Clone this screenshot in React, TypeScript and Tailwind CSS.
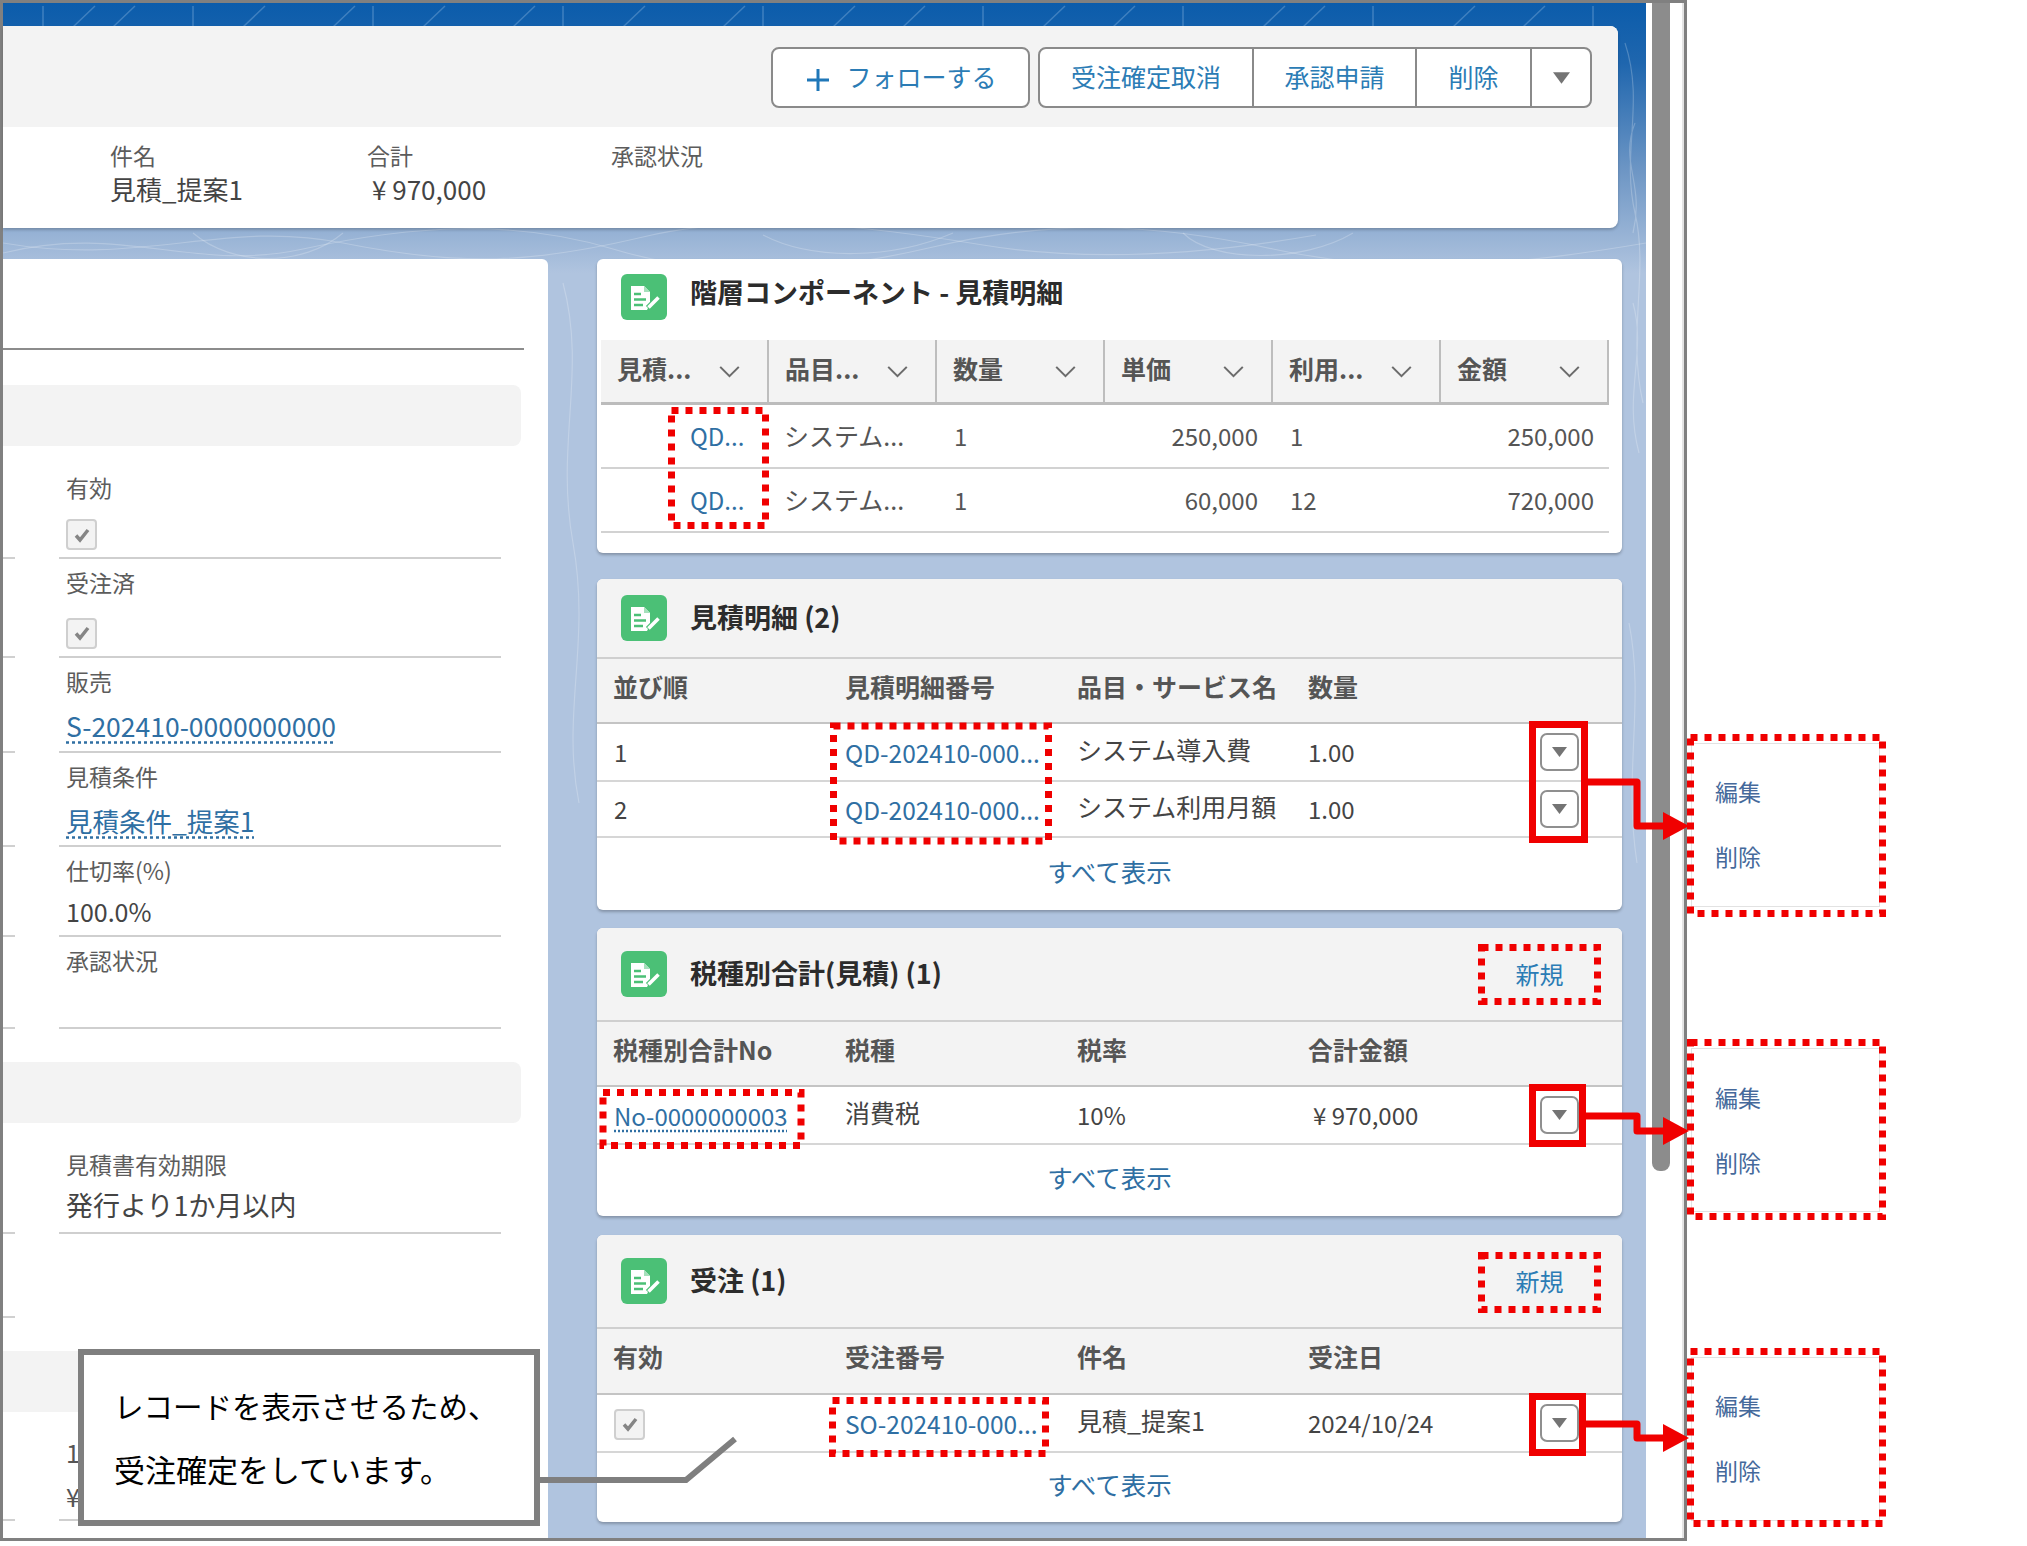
import type { ReactNode } from "react";

const linkClass = "text-[#2f6fa3]";

function RecordIcon() {
  return (
    <svg viewBox="0 0 46 46" className="w-[46px] h-[46px] shrink-0">
      <rect width="46" height="46" rx="6" fill="#4bc076" />
      <path d="M10 12h13l6 6v12l-3 6H10z" fill="#fff" />
      <path d="M23 12l6 6h-6z" fill="#a5e0bb" />
      <path d="M13 20h7M13 25.500h12M13 31h9" stroke="#4bc076" strokeWidth="2.500" />
      <path d="M27 34l11-11" stroke="#4bc076" strokeWidth="6" />
      <path d="M27.500 33.500l10-10" stroke="#fff" strokeWidth="3.500" />
    </svg>
  );
}

function Caret({ className }: { className: string }) {
  return (
    <svg viewBox="0 0 18 12" className={className}>
      <path d="M0 0h18L9 12z" fill="#747474" />
    </svg>
  );
}

function Checkbox() {
  return (
    <span className="flex items-center justify-center w-[31px] h-[31px] bg-[#f3f3f3] border-2 border-[#cfcfcf] rounded-[4px]">
      <svg viewBox="0 0 20 20" className="w-[20px] h-[20px]">
        <path d="M4 10.500l4 4.500 8-10" fill="none" stroke="#858585" strokeWidth="3.500" />
      </svg>
    </span>
  );
}

function RowMenu() {
  return (
    <span className="flex items-center justify-center w-[39px] h-[38px] bg-white border-2 border-[#8f8f8f] rounded-[7px]">
      <Caret className="w-[15px] h-[10px]" />
    </span>
  );
}

// cells sit slightly off the row centre in the source, kanji above and links below
function Jp({ children }: { children: ReactNode }) {
  return <div className="pb-[5px]">{children}</div>;
}

function Num({ children }: { children: ReactNode }) {
  return <div className="text-[24px]">{children}</div>;
}

function RowLink({ children, dotted }: { children: ReactNode; dotted?: boolean }) {
  return (
    <div className={`pt-[3px] text-[24.500px] ${linkClass}`}>
      <span className={dotted ? "text-[24px] underline decoration-dotted underline-offset-4" : ""}>{children}</span>
    </div>
  );
}

function Field({ label, height, valueClass = "", children }: { label: string; height: string; valueClass?: string; children?: ReactNode }) {
  return (
    <div className="flex items-end">
      <div className="w-[12px] border-b-2 border-[#d0d0d0]" />
      <div className={`ml-[44px] w-[442px] border-b-2 border-[#cfcfcf] pl-[7px] ${height}`}>
        <div className="mt-[4px] h-[38px] leading-[38px] text-[23px] text-[#5c5c5c]">{label}</div>
        <div className={`h-[52px] flex items-center text-[#444] ${valueClass}`}>{children}</div>
      </div>
    </div>
  );
}

function LeftPanel() {
  return (
    <div className="w-[545px] bg-white rounded-tr-md overflow-hidden">
      <div className="h-[91px] w-[521px] border-b-2 border-[#8c8c8c]" />
      <div className="mt-[35px] h-[61px] w-[518px] bg-[#f3f3f3] rounded-r-lg" />
      <div className="flex items-end">
        <div className="w-[12px] border-b-2 border-[#d0d0d0]" />
        <div className="ml-[44px] w-[442px] h-[113px] border-b-2 border-[#cfcfcf] pl-[7px] pt-[22px]">
          <div className="h-[38px] leading-[38px] text-[23px] text-[#5c5c5c]">有効</div>
          <div className="mt-[13px]"><Checkbox /></div>
        </div>
      </div>
      <Field label="受注済" height="h-[99px]"><div className="mt-[12px]"><Checkbox /></div></Field>
      <Field label="販売" height="h-[95px]" valueClass="text-[26.500px]">
        <span className={`${linkClass} underline decoration-dotted underline-offset-4`}>S-202410-0000000000</span>
      </Field>
      <Field label="見積条件" height="h-[94px]" valueClass="text-[26.500px]">
        <span className={`${linkClass} underline decoration-dotted underline-offset-4`}>見積条件_提案1</span>
      </Field>
      <Field label="仕切率(%)" height="h-[90px]" valueClass="text-[25px] pb-[6px]">100.0%</Field>
      <Field label="承認状況" height="h-[92px]" />
      <div className="mt-[33px] h-[61px] w-[518px] bg-[#f3f3f3] rounded-r-lg" />
      <div className="mt-[18px]">
        <Field label="見積書有効期限" height="h-[93px]" valueClass="text-[27px] pb-[7px]">発行より1か月以内</Field>
      </div>
      <div className="w-[12px] h-[84px] border-b-2 border-[#d0d0d0]" />
      <div className="mt-[33px] h-[61px] w-[518px] bg-[#f3f3f3] rounded-r-lg" />
      <div className="flex items-end mt-[18px]">
        <div className="w-[12px] border-b-2 border-[#d0d0d0]" />
        <div className="ml-[44px] w-[442px] h-[91px] border-b-2 border-[#cfcfcf] pl-[7px] text-[25px] leading-[44px] text-[#555]">
          <div>1</div>
          <div>¥</div>
        </div>
      </div>
    </div>
  );
}

function Panel({ title, top, className, action, children }: { title: string; top: string; className: string; action?: boolean; children: ReactNode }) {
  return (
    <div className={`bg-white rounded-md shadow-[0_2px_3px_rgba(0,0,0,0.25)] overflow-hidden ${className}`}>
      <div className={`flex items-center bg-[#f3f3f3] pl-[24px] pr-[21px] border-b-2 border-[#cfcfcf] ${top}`}>
        <RecordIcon />
        <div className="ml-[23px] pb-[2px] text-[27px] font-bold text-[#2c2c2c] flex-1">{title}</div>
        {action && <div className="w-[123px] text-center text-[24px] text-[#2b7cb5]">新規</div>}
      </div>
      {children}
    </div>
  );
}

function DataTable({ headers, rows, headHeight, rowHeights, footHeight }: { headers: string[]; rows: ReactNode[][]; headHeight: string; rowHeights: string[]; footHeight: string }) {
  return (
    <div>
      <div className={`grid grid-cols-[248px_232px_231px_232px_82px] items-center pb-[8px] bg-[#f3f3f3] border-b-2 border-[#c4c4c4] text-[25px] font-bold text-[#555] ${headHeight}`}>
        {headers.map((h, i) => (
          <div key={h} className={i === 0 ? "pl-[16px]" : ""}>{h}</div>
        ))}
      </div>
      {rows.map((row, r) => (
        <div key={r} className={`grid grid-cols-[248px_232px_231px_232px_82px] items-center border-b-2 border-[#d6d6d6] text-[25px] text-[#444] ${rowHeights[r]}`}>
          {row.map((cell, i) => (
            <div key={i} className={i === 0 ? "pl-[17px]" : ""}>{cell}</div>
          ))}
          <RowMenu />
        </div>
      ))}
      <div className={`flex items-center justify-center pb-[6px] text-[25.500px] ${linkClass} ${footHeight}`}>すべて表示</div>
    </div>
  );
}

const hierarchyHeads = ["見積...", "品目...", "数量", "単価", "利用...", "金額"];
const hierarchyRows = [
  ["QD...", "システム...", "1", "250,000", "1", "250,000"],
  ["QD...", "システム...", "1", "60,000", "12", "720,000"],
];
const hierarchyCols = [
  `pl-[89px] ${linkClass}`,
  "pl-[15px] text-[25px]",
  "pl-[17px]",
  "pr-[15px] text-right",
  "pl-[17px]",
  "pr-[15px] text-right",
];

function HierarchyPanel() {
  return (
    <div className="h-[294px] bg-white rounded-md shadow-[0_2px_3px_rgba(0,0,0,0.25)]">
      <div className="h-[81px] flex items-center pl-[24px] pb-[5px]">
        <RecordIcon />
        <div className="ml-[23px] pb-[9px] text-[27px] font-bold text-[#2c2c2c]">階層コンポーネント - 見積明細</div>
      </div>
      <div className="ml-[4px] w-[1008px]">
        <div className="grid grid-cols-6 h-[65px] bg-[#f3f3f3] border-b-[3px] border-[#bcbcbc]">
          {hierarchyHeads.map((h) => (
            <div key={h} className="flex items-center justify-between pl-[16px] pr-[26px] border-r-2 border-[#bdbdbd] text-[25px] font-bold text-[#555]">
              <span className="pb-[5px]">{h}</span>
              <svg viewBox="0 0 24 14" className="w-[23px] h-[13px]">
                <path d="M2 2l10 10L22 2" fill="none" stroke="#6b6b6b" strokeWidth="2.200" />
              </svg>
            </div>
          ))}
        </div>
        {hierarchyRows.map((row, r) => (
          <div key={r} className="grid grid-cols-6 h-[64px] items-center border-b-2 border-[#d2d2d2] text-[24px] text-[#555]">
            {row.map((cell, i) => (
              <div key={i} className={hierarchyCols[i]}>{cell}</div>
            ))}
          </div>
        ))}
      </div>
    </div>
  );
}

function RightColumn() {
  return (
    <div className="ml-[49px] w-[1025px]">
      <HierarchyPanel />
      <Panel title="見積明細 (2)" top="h-[80px]" className="mt-[26px] h-[331px]">
        <DataTable
          headers={["並び順", "見積明細番号", "品目・サービス名", "数量"]}
          rows={[
            [<Num>1</Num>, <RowLink>QD-202410-000...</RowLink>, <Jp>システム導入費</Jp>, <Num>1.00</Num>],
            [<Num>2</Num>, <RowLink>QD-202410-000...</RowLink>, <Jp>システム利用月額</Jp>, <Num>1.00</Num>],
          ]}
          headHeight="h-[65px]"
          rowHeights={["h-[58px]", "h-[56px]"]}
          footHeight="h-[72px]"
        />
      </Panel>
      <Panel title="税種別合計(見積) (1)" top="h-[94px]" className="mt-[18px] h-[288px]" action>
        <DataTable
          headers={["税種別合計No", "税種", "税率", "合計金額"]}
          rows={[
            [
              <RowLink dotted>No-0000000003</RowLink>,
              <Jp>消費税</Jp>,
              <Num>10%</Num>,
              <Num><span className="pl-[5px]">¥ 970,000</span></Num>,
            ],
          ]}
          headHeight="h-[65px]"
          rowHeights={["h-[58px]"]}
          footHeight="h-[71px]"
        />
      </Panel>
      <Panel title="受注 (1)" top="h-[94px]" className="mt-[19px] h-[287px]" action>
        <DataTable
          headers={["有効", "受注番号", "件名", "受注日"]}
          rows={[
            [
              <div className="pt-[2px]"><Checkbox /></div>,
              <RowLink>SO-202410-000...</RowLink>,
              <Jp>見積_提案1</Jp>,
              <Num>2024/10/24</Num>,
            ],
          ]}
          headHeight="h-[66px]"
          rowHeights={["h-[58px]"]}
          footHeight="h-[69px]"
        />
      </Panel>
    </div>
  );
}

function PageHeader() {
  return (
    <div className="w-[1615px] h-[202px] rounded-r-lg overflow-hidden bg-white shadow-[0_2px_3px_rgba(0,0,0,0.2)]">
      <div className="h-[101px] bg-[#f3f3f3] flex justify-end items-start pt-[21px] pr-[26px] gap-[8px] text-[25px] text-[#2b7cb5]">
        <div className="w-[259px] h-[61px] flex items-center justify-center gap-[16px] pb-[2px] bg-white border-2 border-[#8a8a8a] rounded-lg">
          <svg viewBox="0 0 24 24" className="w-[24px] h-[24px] mt-[6px] ml-[2px]">
            <path d="M12 1v22M1 12h22" stroke="#1f77b8" strokeWidth="3" />
          </svg>
          フォローする
        </div>
        <div className="flex h-[61px] bg-white border-2 border-[#8a8a8a] rounded-lg divide-x-2 divide-[#8a8a8a]">
          <div className="w-[214px] flex items-center justify-center pb-[2px]">受注確定取消</div>
          <div className="w-[163px] flex items-center justify-center pb-[2px]">承認申請</div>
          <div className="w-[115px] flex items-center justify-center pb-[2px]">削除</div>
          <div className="w-[58px] flex items-center justify-center">
            <Caret className="w-[17px] h-[12px]" />
          </div>
        </div>
      </div>
      <div className="flex pl-[107px] pt-[9px] text-[#444]">
        <div className="w-[257px]">
          <div className="text-[23px] leading-[38px] text-[#5c5c5c]">件名</div>
          <div className="text-[26px] leading-[30px]">見積_提案1</div>
        </div>
        <div className="w-[244px]">
          <div className="text-[23px] leading-[38px] text-[#5c5c5c]">合計</div>
          <div className="pl-[5px] text-[26px] leading-[30px]">¥ 970,000</div>
        </div>
        <div className="text-[23px] leading-[38px] text-[#5c5c5c]">承認状況</div>
      </div>
    </div>
  );
}

// topographic texture of the page background
const contours = [
  "M0 250c120-30 190 20 300-4s210-30 310 0 200 26 320-2 220-24 340 2 220 20 373-6",
  "M0 240c140 24 220-24 340 0s190 20 300-6 230-10 340 8 230 8 333-10",
  "M190 230c40 34 110 34 150 0M760 232c50 26 130 24 190-2M1180 230c30 30 120 30 170 0",
  "M1622 40c20 60-4 110 10 170s-8 120 8 190M1632 120c-16 40 10 60-2 110M1630 300c14 50-10 90 6 150",
  "M560 280c24 90-8 160 10 260s-12 170 6 260",
  "M1626 620c16 80-6 150 8 240",
];
const streaks = [40, 70, 110, 190, 240, 330, 370, 420, 510, 560, 620, 720, 760, 830, 900, 980, 1040, 1110, 1180, 1260, 1300, 1370, 1450, 1520, 1590];

function PageTexture() {
  return (
    <svg className="absolute inset-0 w-full h-full" viewBox="0 0 1643 1535" preserveAspectRatio="none">
      {streaks.map((x, i) => (
        <path key={x} d={`M${x} 24L${x + (i % 3 === 0 ? 0 : 22)} 3`} stroke="#9cc0e6" strokeOpacity="0.35" strokeWidth="1.500" fill="none" />
      ))}
      {contours.map((d) => (
        <path key={d} d={d} stroke="#fff" strokeOpacity="0.22" strokeWidth="1.200" fill="none" />
      ))}
    </svg>
  );
}

const dottedBoxes = [
  [671.5, 410.5, 94, 115],
  [833.5, 726, 215, 115],
  [603, 1092.5, 198, 53],
  [832.5, 1400.5, 213, 53],
  [1481.5, 947.5, 116, 54],
  [1481.5, 1255.5, 116, 54],
  [1690.5, 737.5, 192, 176],
  [1690.5, 1042.5, 192, 174],
  [1690.5, 1351.5, 192, 172],
];
const solidBoxes = [
  [1532.5, 724.5, 52, 115],
  [1532.5, 1087.5, 50, 56],
  [1532.5, 1396.5, 50, 56],
];
const arrows = [
  [1588, 782, 826],
  [1586, 1116, 1131],
  [1586, 1424, 1438],
];

function Markup() {
  return (
    <svg className="absolute inset-0 w-[2027px] h-[1546px] pointer-events-none" viewBox="0 0 2027 1546">
      {dottedBoxes.map(([x, y, w, h]) => (
        <rect key={`${x}-${y}`} x={x} y={y} width={w} height={h} fill="none" stroke="#f00000" strokeWidth="7" strokeDasharray="7 7" />
      ))}
      {solidBoxes.map(([x, y, w, h]) => (
        <rect key={`${x}-${y}`} x={x} y={y} width={w} height={h} fill="none" stroke="#f00000" strokeWidth="7" />
      ))}
      {arrows.map(([x, y1, y2]) => (
        <g key={y1}>
          <path d={`M${x} ${y1}H1637V${y2}H1668`} fill="none" stroke="#f00000" strokeWidth="7" strokeLinejoin="round" />
          <path d={`M1663 ${y2 - 14}L1689 ${y2}L1663 ${y2 + 14}z`} fill="#f00000" />
        </g>
      ))}
      <path d="M540 1480H686L735 1439" fill="none" stroke="#7f7f7f" strokeWidth="6" />
    </svg>
  );
}

function MenuCard({ className }: { className: string }) {
  return (
    <div className={`w-[189px] border border-[#e2e2e2] pl-[23px] text-[23px] text-[#45699b] flex flex-col ${className}`}>
      <div className="h-[65px] flex items-center">編集</div>
      <div className="h-[65px] flex items-center">削除</div>
    </div>
  );
}

export default function App() {
  return (
    <div className="relative flex w-[2027px] h-[1546px] bg-white overflow-hidden font-['Noto_Sans_CJK_JP',sans-serif]">
      <div className="flex w-[1687px] h-[1541px] border-[3px] border-[#808080]">
        <div className="relative w-[1643px] flex flex-col pt-[23px] bg-[linear-gradient(180deg,#0b5cab_0px,#1f66ae_60px,#6f97c5_170px,#b0c4df_270px)]">
          <PageTexture />
          <div className="relative">
            <PageHeader />
          </div>
          <div className="relative flex flex-1 mt-[31px] min-h-0">
            <LeftPanel />
            <RightColumn />
          </div>
        </div>
        <div className="w-[38px] bg-white border-r-2 border-[#e4e4e4]">
          <div className="ml-[6px] w-[18px] h-[1168px] bg-[#8c8c8c] rounded-b-lg" />
        </div>
      </div>

      <div className="pt-[743px] pl-[4px]">
        <MenuCard className="pt-[15px] h-[164px]" />
        <MenuCard className="mt-[141px] pt-[16px] h-[164px]" />
        <MenuCard className="mt-[145px] pt-[15px] h-[164px]" />
      </div>

      <div className="absolute left-[78px] top-[1349px] w-[462px] h-[177px] bg-white border-[6px] border-[#7f7f7f] pl-[30px] pt-[18px] leading-[64px] text-black">
        <div className="text-[29.500px]">レコードを表示させるため、</div>
        <div className="text-[31px]">受注確定をしています。</div>
      </div>

      <Markup />
    </div>
  );
}
